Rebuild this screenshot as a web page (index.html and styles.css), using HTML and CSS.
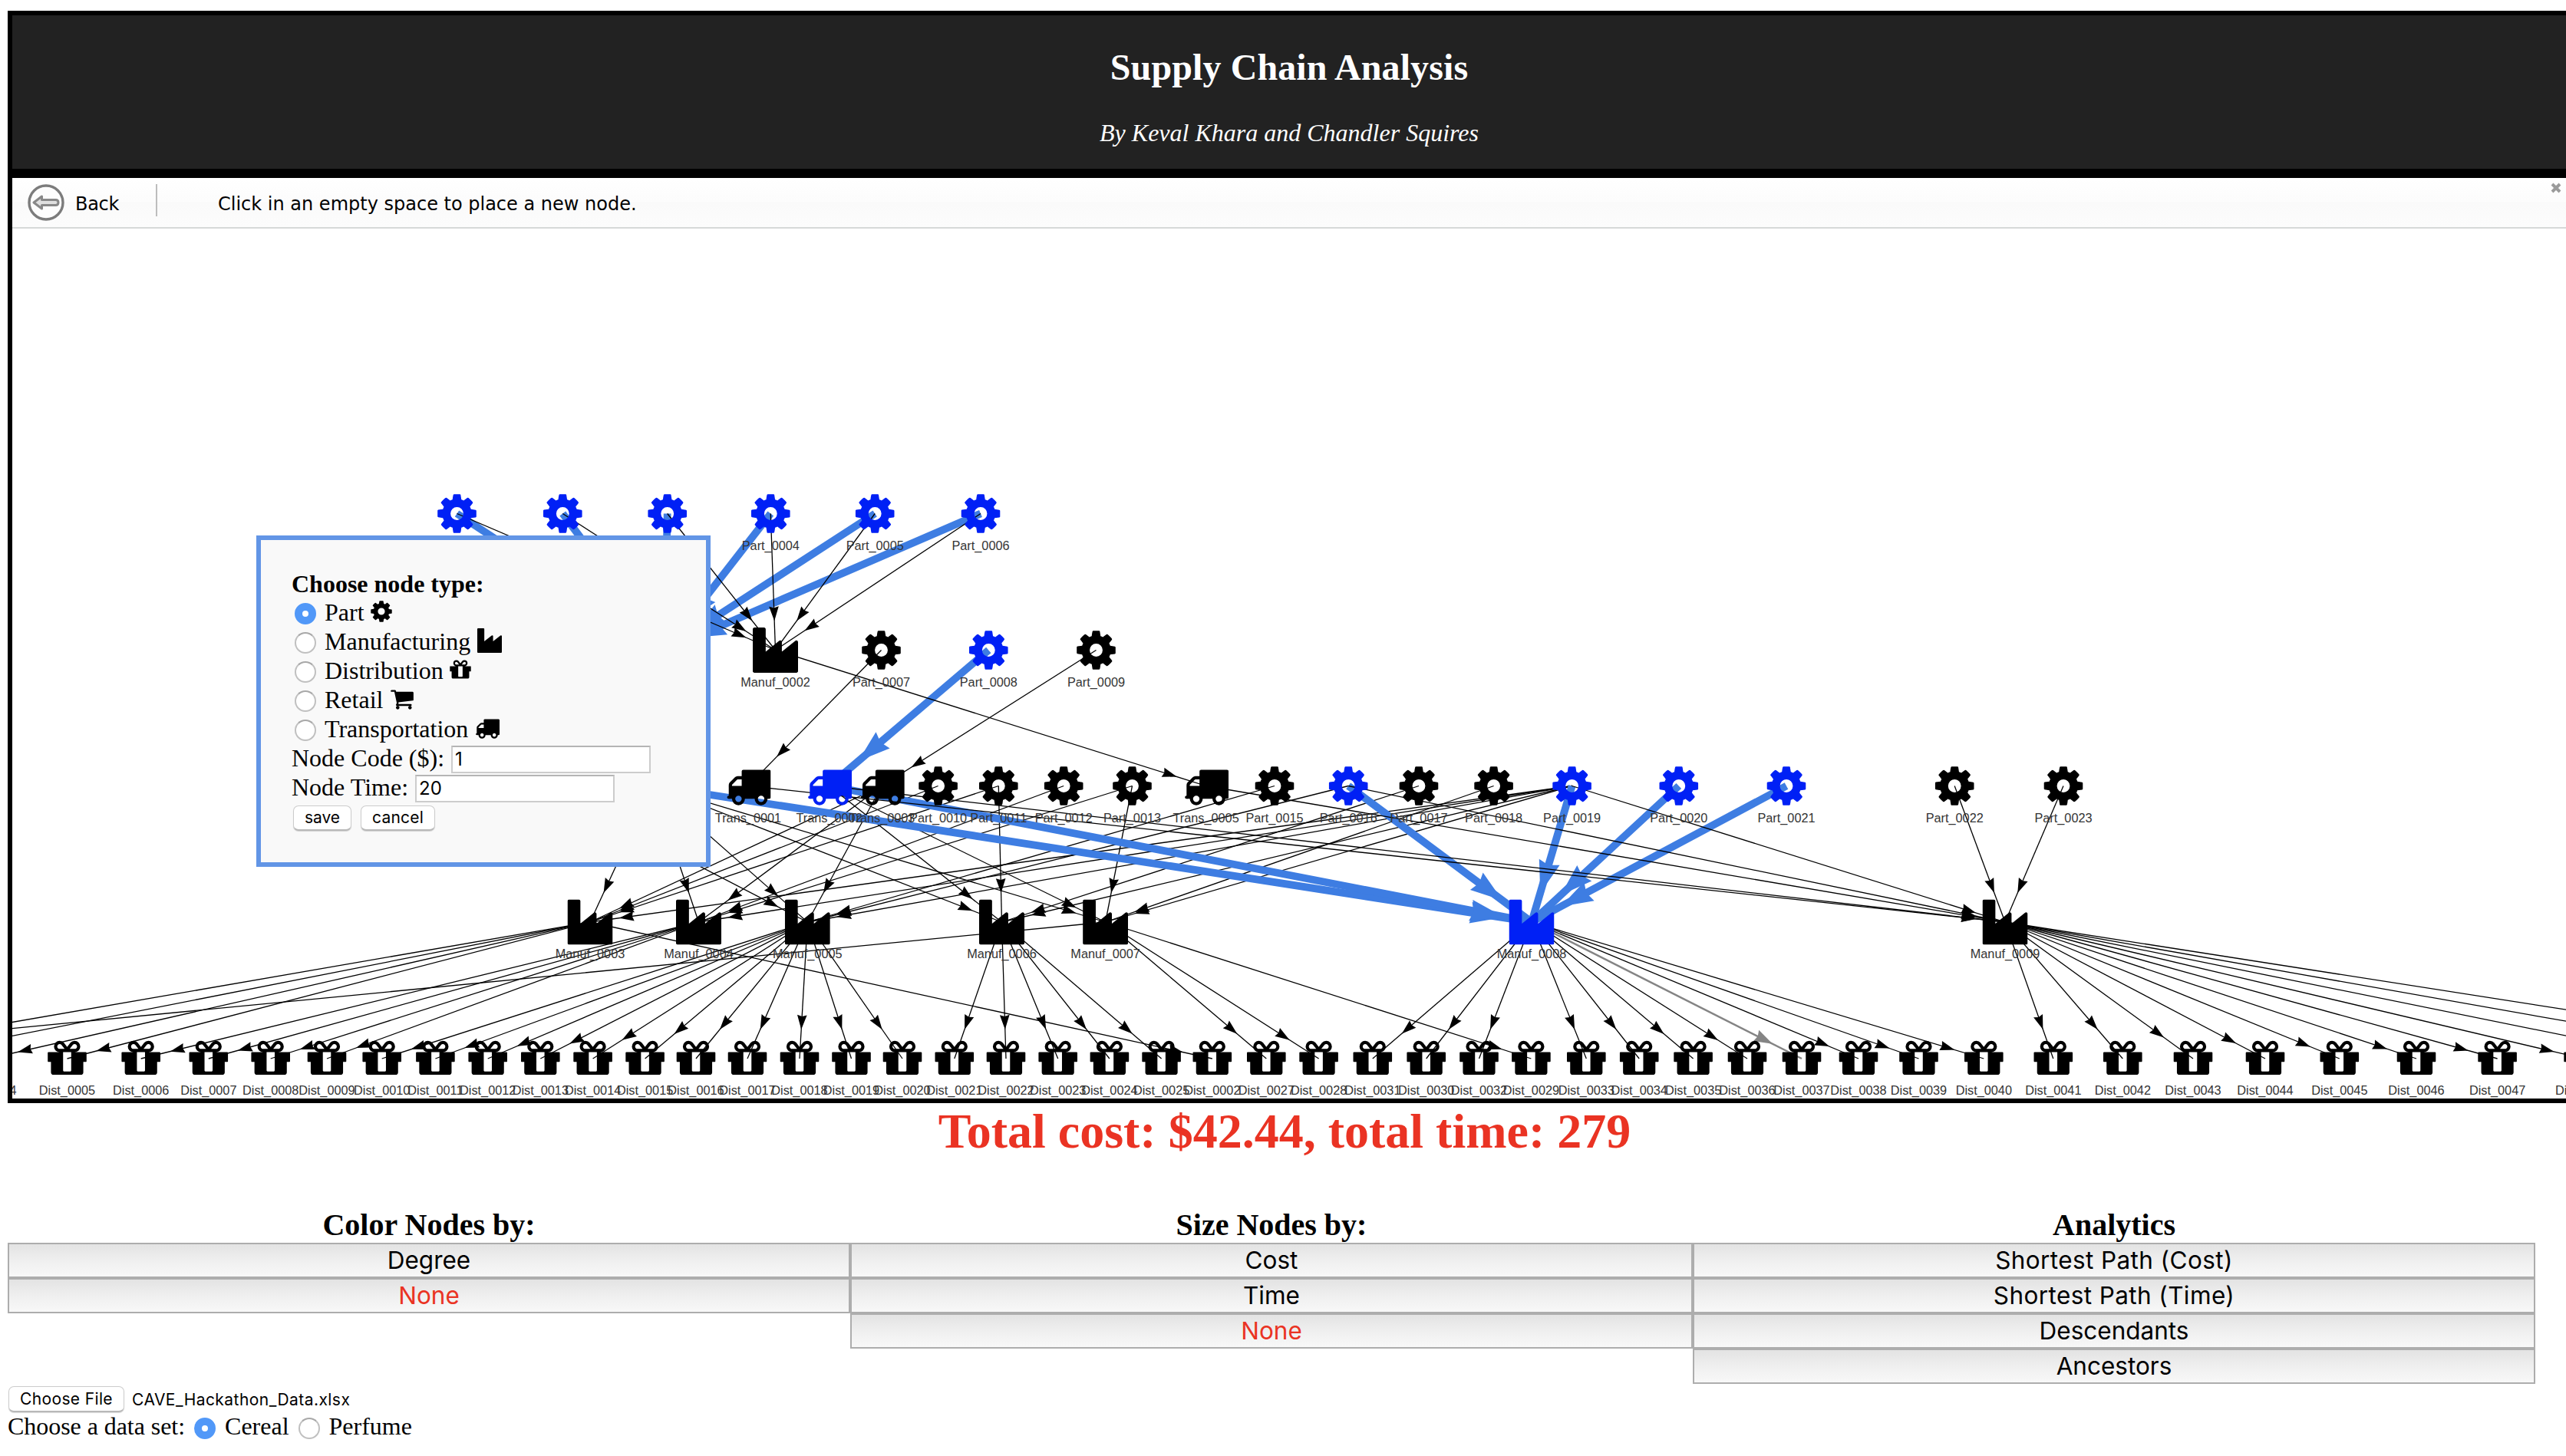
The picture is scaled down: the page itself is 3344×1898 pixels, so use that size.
FILE: index.html
```html
<!DOCTYPE html>
<html lang="en">
<head>
<meta charset="utf-8">
<title>Supply Chain Analysis</title>
<link rel="stylesheet" href="styles.css">
</head>
<body>
<svg class="defs" width="0" height="0">
  <symbol id="part" viewBox="0 0 1792 1792"><path d="M1152 896q0-106-75-181t-181-75-181 75-75 181 75 181 181 75 181-75 75-181zm512-109v222q0 12-8 23t-20 13l-185 28q-19 54-39 91 35 50 107 138 10 12 10 25t-9 23q-27 37-99 108t-94 71q-12 0-26-9l-138-108q-44 23-91 38-16 136-29 186-7 28-36 28h-222q-14 0-24.500-8.500t-11.500-21.500l-28-184q-49-16-90-37l-141 107q-10 9-25 9-14 0-25-11-126-114-165-168-7-10-7-23 0-12 8-23 15-21 51-66.500t54-70.500q-27-50-41-99l-183-27q-13-2-21-12.500t-8-23.500v-222q0-12 8-23t19-13l186-28q14-46 39-92-40-57-107-138-10-12-10-24 0-10 9-23 26-36 98.500-107.500t94.500-71.500q13 0 26 10l138 107q44-23 91-38 16-136 29-186 7-28 36-28h222q14 0 24.500 8.500t11.500 21.500l28 184q49 16 90 37l142-107q9-9 24-9 13 0 25 10 129 119 165 170 7 8 7 22 0 12-8 23-15 21-51 66.500t-54 70.500q26 50 41 98l183 28q13 2 21 12.500t8 23.500z"/></symbol>
  <symbol id="trans" viewBox="0 0 1792 1792"><path d="M640 1408q0-52-38-90t-90-38-90 38-38 90 38 90 90 38 90-38 38-90zm-384-512h384v-256h-158q-13 0-22 9l-195 195q-9 9-9 22v30zm1280 512q0-52-38-90t-90-38-90 38-38 90 38 90 90 38 90-38 38-90zm256-1088v1024q0 15-4 26.500t-13.500 18.500-16.500 11.500-23.500 6-22.500 2-25.500 0-22.500-.5q0 106-75 181t-181 75-181-75-75-181h-384q0 106-75 181t-181 75-181-75-75-181h-64q-3 0-22.500.5t-25.500 0-22.500-2-23.500-6-16.500-11.500-13.500-18.500-4-26.500q0-26 19-45t45-19v-320q0-8-.5-35t0-38 2.500-34.500 6.500-37 14-30.500 22.500-30l198-198q19-19 50.500-32t58.500-13h160v-192q0-26 19-45t45-19h1024q26 0 45 19t19 45z"/></symbol>
  <symbol id="manuf" viewBox="0 0 1792 1792"><path d="M448 0q26 0 45 19t19 45v891l536-429q17-14 40-14q26 0 45 19t19 45v379l536-429q17-14 40-14q26 0 45 19t19 45v1152q0 26-19 45t-45 19h-1664q-26 0-45-19t-19-45v-1664q0-26 19-45t45-19h384z"/></symbol>
  <symbol id="dist" viewBox="0 0 1792 1792"><path fill-rule="evenodd" transform="translate(128 1536) scale(1 -1)" d="M928 180v56v468v192h-320v-192v-468v-56q0-25 18-38.500t46-13.500h192q28 0 46 13.500t18 38.500zM472 1024h195l-126 161q-26 31-69 31q-40 0-68-28t-28-68t28-68t68-28zM1160 1120q0 40-28 68t-68 28q-43 0-69-31l-125-161h194q40 0 68 28t28 68zM1536 864v-320q0-14-9-23t-23-9h-96v-416q0-40-28-68t-68-28h-1088q-40 0-68 28t-28 68v416h-96q-14 0-23 9t-9 23v320q0 14 9 23t23 9h440q-93 0-158.500 65.500t-65.500 158.500t65.500 158.500t158.500 65.500q107 0 168-77l128-165l128 165q61 77 168 77q93 0 158.500-65.500t65.500-158.500t-65.500-158.500t-158.500-65.500h440q14 0 23-9t9-23z"/></symbol>
  <symbol id="cart" viewBox="0 0 1792 1792"><path d="M704 1536q0 52-38 90t-90 38-90-38-38-90 38-90 90-38 90 38 38 90zm896 0q0 52-38 90t-90 38-90-38-38-90 38-90 90-38 90 38 38 90zm128-1088v512q0 24-16.500 42.500t-40.500 21.500l-1044 122q13 60 13 70 0 16-24 64h920q26 0 45 19t19 45-19 45-45 19h-1024q-26 0-45-19t-19-45q0-11 8-31.500t16-36 21.500-40 15.500-29.500l-177-823h-204q-26 0-45-19t-19-45 19-45 45-19h256q16 0 28.500 6.500t19.500 15.500 13 24.500 8 26 5.500 29.500 4.500 26h1201q26 0 45 19t19 45z"/></symbol>
</svg>

<header class="banner">
  <h2 class="banner-title">Supply Chain Analysis</h2>
  <p class="banner-sub">By Keval Khara and Chandler Squires</p>
</header>

<section class="network">
  <div class="toolbar">
    <div class="back">
      <svg class="back-icon" viewBox="0 0 48 48"><circle cx="24" cy="24" r="22" fill="#fdfdfd" stroke="#7c7c7c" stroke-width="3.4"/><path d="M8 24l10.500-8v4.500h18q3.500 0 3.500 3.500t-3.500 3.500h-18v4.500z" fill="#e0e0e0" stroke="#888" stroke-width="3" stroke-linejoin="round"/></svg>
      <span class="back-label">Back</span>
    </div>
    <div class="separator"></div>
    <span class="hint">Click in an empty space to place a new node.</span>
    <svg class="close" viewBox="0 0 14 14"><path d="M2 2l10 10M12 2l-10 10" stroke="#9b9b9b" stroke-width="4"/></svg>
  </div>
  <svg class="canvas" id="canvas" viewBox="16 298 3328 1134"></svg>
  <form class="popup">
    <b class="popup-title">Choose node type:</b>
    <label class="row"><input type="radio" name="type" class="radio" checked><span>Part</span><svg class="ico"><use href="#part"/></svg></label>
    <label class="row"><input type="radio" name="type" class="radio"><span>Manufacturing</span><svg class="ico wide"><use href="#manuf"/></svg></label>
    <label class="row"><input type="radio" name="type" class="radio"><span>Distribution</span><svg class="ico"><use href="#dist"/></svg></label>
    <label class="row"><input type="radio" name="type" class="radio"><span>Retail</span><svg class="ico wide"><use href="#cart"/></svg></label>
    <label class="row"><input type="radio" name="type" class="radio"><span>Transportation</span><svg class="ico wide"><use href="#trans"/></svg></label>
    <label class="row field"><span>Node Code ($):</span><input class="text" value="1"></label>
    <label class="row field"><span>Node Time:</span><input class="text" value="20"></label>
    <div class="buttons"><button type="button" class="btn save">save</button><button type="button" class="btn cancel">cancel</button></div>
  </form>
</section>

<h1 class="total">Total cost: $42.44, total time: 279</h1>

<main class="controls">
  <section class="group">
    <h3 class="group-title">Color Nodes by:</h3>
    <button class="option">Degree</button>
    <button class="option active">None</button>
  </section>
  <section class="group">
    <h3 class="group-title">Size Nodes by:</h3>
    <button class="option">Cost</button>
    <button class="option">Time</button>
    <button class="option active">None</button>
  </section>
  <section class="group">
    <h3 class="group-title">Analytics</h3>
    <button class="option long">Shortest Path (Cost)</button>
    <button class="option long">Shortest Path (Time)</button>
    <button class="option">Descendants</button>
    <button class="option">Ancestors</button>
  </section>
</main>

<div class="file"><button class="btn choose">Choose File</button><span class="filename">CAVE_Hackathon_Data.xlsx</span></div>
<div class="dataset"><span class="ds-label">Choose a data set:</span><input type="radio" name="ds" class="radio big" checked><span>Cereal</span><input type="radio" name="ds" class="radio big"><span>Perfume</span></div>
<script src="graph.js"></script>
</body>
</html>
```
FILE: styles.css
```css
html { background: #fff; overflow: hidden; }
body {
  margin: 0;
  padding: 14px 0 0 10px;
  width: 3340px;
  font-family: "Liberation Serif", "Times New Roman", serif;
  font-size: 32px;
  color: #000;
}
.defs { position: absolute; }
h1, h2, h3, p { margin: 0; }

.banner {
  box-sizing: border-box;
  height: 212px;
  border: 6px solid #000;
  background: #222;
  color: #fff;
  text-align: center;
  padding-top: 41px;
}
.banner-title { font-size: 48px; line-height: 54px; letter-spacing: 0.1px; }
.banner-sub { font-style: italic; line-height: 36px; margin-top: 40px; }

.network {
  position: relative;
  box-sizing: border-box;
  height: 1212px;
  border: 6px solid #000;
}
.toolbar {
  display: flex;
  box-sizing: border-box;
  height: 66px;
  padding: 8px 6px 0 20px;
  border-bottom: 2px solid #d6d9d8;
  background: linear-gradient(#fff, #fcfcfc 48%, #fafafa 50%, #fcfcfc);
  font-family: "DejaVu Sans", Verdana, sans-serif;
  font-size: 24px;
}
.back { display: flex; align-items: center; height: 48px; gap: 14px; width: 167px; }
.back-icon { width: 48px; height: 48px; }
.back-label { letter-spacing: -0.3px; padding-top: 3px; }
.separator { width: 2px; height: 42px; background: #bdbdbd; margin-right: 79px; }
.hint { line-height: 52px; flex: 1; white-space: nowrap; }
.close { width: 14px; height: 14px; margin-top: -2px; }
.canvas { display: block; width: 3328px; height: 1134px; }
.node-label { font: 16.3px "Liberation Sans", Arial, sans-serif; fill: #343434; text-anchor: middle; }

.popup {
  position: absolute;
  left: 318px;
  top: 466px;
  box-sizing: border-box;
  width: 592px;
  height: 432px;
  padding: 38px 40px 0;
  border: 6px solid #6295e6;
  background: #f9f9f9;
}
.popup-title { display: block; line-height: 38px; height: 37px; }
.row { display: flex; align-items: center; height: 38px; line-height: 38px; white-space: nowrap; }
.row span { margin-top: -1px; }
.ico { width: 32px; height: 32px; margin-left: 6px; margin-top: -3px; }
.wide { margin-left: 8.500px; }
.radio {
  appearance: none;
  box-sizing: border-box;
  width: 28px;
  height: 28px;
  margin: 4px 11px 0 4px;
  border: 2px solid #c0c0c0;
  border-top-color: #a8a8a8;
  border-radius: 50%;
  background: #fff;
}
.radio:checked { border: 10px solid #5198f8; }
.text {
  box-sizing: border-box;
  width: 260px;
  height: 36px;
  margin: 3px 0 0 9px;
  padding: 0 0 0 3px;
  border: 2px solid #ccc;
  border-top-color: #b5b5b5;
  background: #fff;
  font: 24px Inter, sans-serif;
}
.btn {
  box-sizing: border-box;
  height: 33px;
  padding: 0;
  border: 1px solid #ccc;
  border-bottom: 2px solid #b8b8b8;
  border-radius: 7px;
  background: #fff;
  box-shadow: 0 1px 1px rgba(0, 0, 0, .15);
  font: 21px/28px Inter, sans-serif;
  color: #000;
}
.buttons { display: flex; gap: 12px; padding: 5px 0 0 2px; }
.save { width: 76px; }
.cancel { width: 97px; letter-spacing: 0.2px; }

.total {
  width: 3328px;
  font-size: 64px;
  line-height: 74px;
  text-align: center;
  color: #ea3323;
}
.controls { display: flex; align-items: flex-start; width: 3294px; margin-top: 61px; height: 234px; }
.group { display: flex; flex-direction: column; width: 1098px; }
.group-title { font-size: 40px; line-height: 47px; text-align: center; }
.option {
  box-sizing: border-box;
  height: 46px;
  padding: 0;
  border: 2px solid #adadad;
  background: linear-gradient(#e3e3e3, #efefef 50%, #f8f8f8);
  font: 31.5px/40px Inter, sans-serif;
  color: #000;
}
.long { letter-spacing: 0.4px; }
.active { color: #ea3323; }

.file { display: flex; align-items: center; height: 34px; padding-left: 1px; gap: 10px; font: 21px Inter, sans-serif; }
.choose { width: 151px; height: 34px; letter-spacing: 0.35px; }
.filename { letter-spacing: 0.45px; }
.dataset { display: flex; align-items: center; height: 37px; white-space: nowrap; }
.ds-label { letter-spacing: -0.05px; }
.dataset .big { margin: 4px 12px 0 12px; }
```
FILE: graph.js
```js
const canvas = document.getElementById('canvas');
const ROWS = [669.5, 847.5, 1024.5, 1202, 1380];
const nodes = {};
const add = (kind, row, xs, selected = []) => {
  for (const [id, x] of Object.entries(xs)) {
    const key = kind[0].toUpperCase() + id;
    nodes[key] = { kind, id, x, y: ROWS[row], sel: selected.includes(id) };
  }
};
const P1 = { '0001': 595.5, '0002': 733.3, '0003': 869.7, '0004': 1004.3, '0005': 1140.2, '0006': 1278 };
add('part', 0, P1, Object.keys(P1));
add('manuf', 1, { '0001': 866, '0002': 1010.5 }, ['0001']);
add('part', 1, { '0007': 1148.5, '0008': 1288.3, '0009': 1428.5 }, ['0008']);
add('trans', 2, { '0000': 710, '0004': 851, '0001': 975, '0002': 1080.6, '0003': 1149.3, '0005': 1571.6 }, ['0002', '0004']);
add('part', 2, { '0010': 1222.6, '0011': 1301.3, '0012': 1386.2, '0013': 1475.5, '0015': 1661, '0016': 1757.2, '0017': 1849, '0018': 1946.6, '0019': 2048.6, '0020': 2187.8, '0021': 2328, '0022': 2547.2, '0023': 2689 }, ['0016', '0019', '0020', '0021']);
add('manuf', 3, { '0003': 769, '0004': 910.5, '0005': 1052.3, '0006': 1305.5, '0007': 1440.6, '0008': 1996, '0009': 2613 }, ['0008']);
add('dist', 4, { '0001': -389, '0003': -258, '0000': -134, '0004': -15, '0005': 87.5, '0006': 183.7, '0007': 271.8, '0008': 352.7, '0009': 426, '0010': 497.7, '0011': 567.4, '0012': 635.7, '0013': 704.3, '0014': 772.6, '0015': 840.6, '0016': 907, '0017': 974, '0018': 1042, '0019': 1109.5, '0020': 1176, '0021': 1243.8, '0022': 1311, '0023': 1378.7, '0024': 1445.9, '0025': 1513.6, '0002': 1579.8, '0027': 1650.3, '0028': 1718.6, '0031': 1788.8, '0030': 1858.7, '0032': 1927.5, '0029': 1995.4, '0033': 2067.3, '0034': 2136.2, '0035': 2206.6, '0036': 2277, '0037': 2348, '0038': 2422, '0039': 2500.5, '0040': 2585.3, '0041': 2675.8, '0042': 2766.3, '0043': 2858, '0044': 2952, '0045': 3048.8, '0046': 3149, '0047': 3254.6, '0048': 3366.6, '0049': 3491, '0050': 3620, '0051': 3753 });

// target: sources ("*" = on the selected path, "~" = hovered)
const incoming = {
  M0001: 'P0001* P0002* P0003* P0004* P0005* P0006*',
  M0002: 'P0001 P0002 P0003 P0004 P0005 P0006',
  T0001: 'P0007', T0002: 'P0008*', T0003: 'P0009', T0005: 'M0002',
  M0003: 'T0004 T0003 P0010 P0011 P0019',
  M0004: 'T0004 T0003 P0012 P0013 P0019',
  M0005: 'T0000 T0004 T0003 P0015 P0016 P0019',
  M0006: 'T0004 T0002 P0011 P0017 P0019',
  M0007: 'T0004 T0002 P0013 P0018 P0019',
  M0008: 'T0004* T0002* P0016* P0019* P0020* P0021*',
  M0009: 'T0001 T0002 T0005 P0016 P0019 P0022 P0023'
};
const outgoing = {
  M0003: '0000 0002 0003 0004 0005',
  M0004: '0006 0007 0008 0009',
  M0005: '0010 0011 0012 0013 0014 0015 0016 0017 0018 0019 0020',
  M0006: '0021 0022 0023 0024 0025',
  M0007: '0001 0027 0028 0029',
  M0008: '0030 0031 0032 0033 0034 0035 0036 0037~ 0038 0039 0040',
  M0009: '0041 0042 0043 0044 0045 0046 0047 0048 0049 0050 0051'
};
const STYLE = {
  '': { color: '#000', width: 1.3, len: 19 },
  '*': { color: '#3e7de2', width: 9.8, len: 42 },
  '~': { color: '#848484', width: 2.5, len: 24 }
};
let out = '';
// arrow tips stop at the square border around each node
const HALF = 38;
const edge = (a, b, mark) => {
  const s = STYLE[mark], dx = b.x - a.x, dy = b.y - a.y, d = Math.hypot(dx, dy);
  const ux = dx / d, uy = dy / d, L = s.len;
  const gap = HALF / Math.max(Math.abs(ux), Math.abs(uy));
  const tx = b.x - ux * gap, ty = b.y - uy * gap;
  const pt = (back, side) => `${(tx - ux * back - uy * side).toFixed(1)},${(ty - uy * back + ux * side).toFixed(1)}`;
  out += `<path d="M${a.x} ${a.y}L${b.x} ${b.y}" stroke="${s.color}" stroke-width="${s.width}"/>`;
  out += `<polygon points="${pt(0, 0)} ${pt(L, L / 3)} ${pt(L * 0.9, 0)} ${pt(L, -L / 3)}" fill="${s.color}"/>`;
};
const split = t => /[*~]$/.test(t) ? [t.slice(0, -1), t.slice(-1)] : [t, ''];
for (const [to, list] of Object.entries(incoming))
  for (const t of list.split(' ')) { const [k, m] = split(t); edge(nodes[k], nodes[to], m); }
for (const [from, list] of Object.entries(outgoing))
  for (const t of list.split(' ')) { const [k, m] = split(t); edge(nodes[from], nodes['D' + k], m); }

const EM = 59;
for (const n of Object.values(nodes)) {
  if (n.x < -50 || n.x > 3400) continue;
  const name = n.kind[0].toUpperCase() + n.kind.slice(1) + '_' + n.id;
  const covered = n.x > 334 && n.x < 900 && n.y < 1130;
  out += `<use href="#${n.kind}" x="${n.x - EM / 2}" y="${n.y - EM / 2}" width="${EM}" height="${EM}" fill="${n.sel ? '#0020f5' : '#000'}"/>`;
  if (!covered) out += `<text class="node-label" x="${n.x}" y="${n.y + 47}">${name}</text>`;
}
canvas.innerHTML = out;
```
